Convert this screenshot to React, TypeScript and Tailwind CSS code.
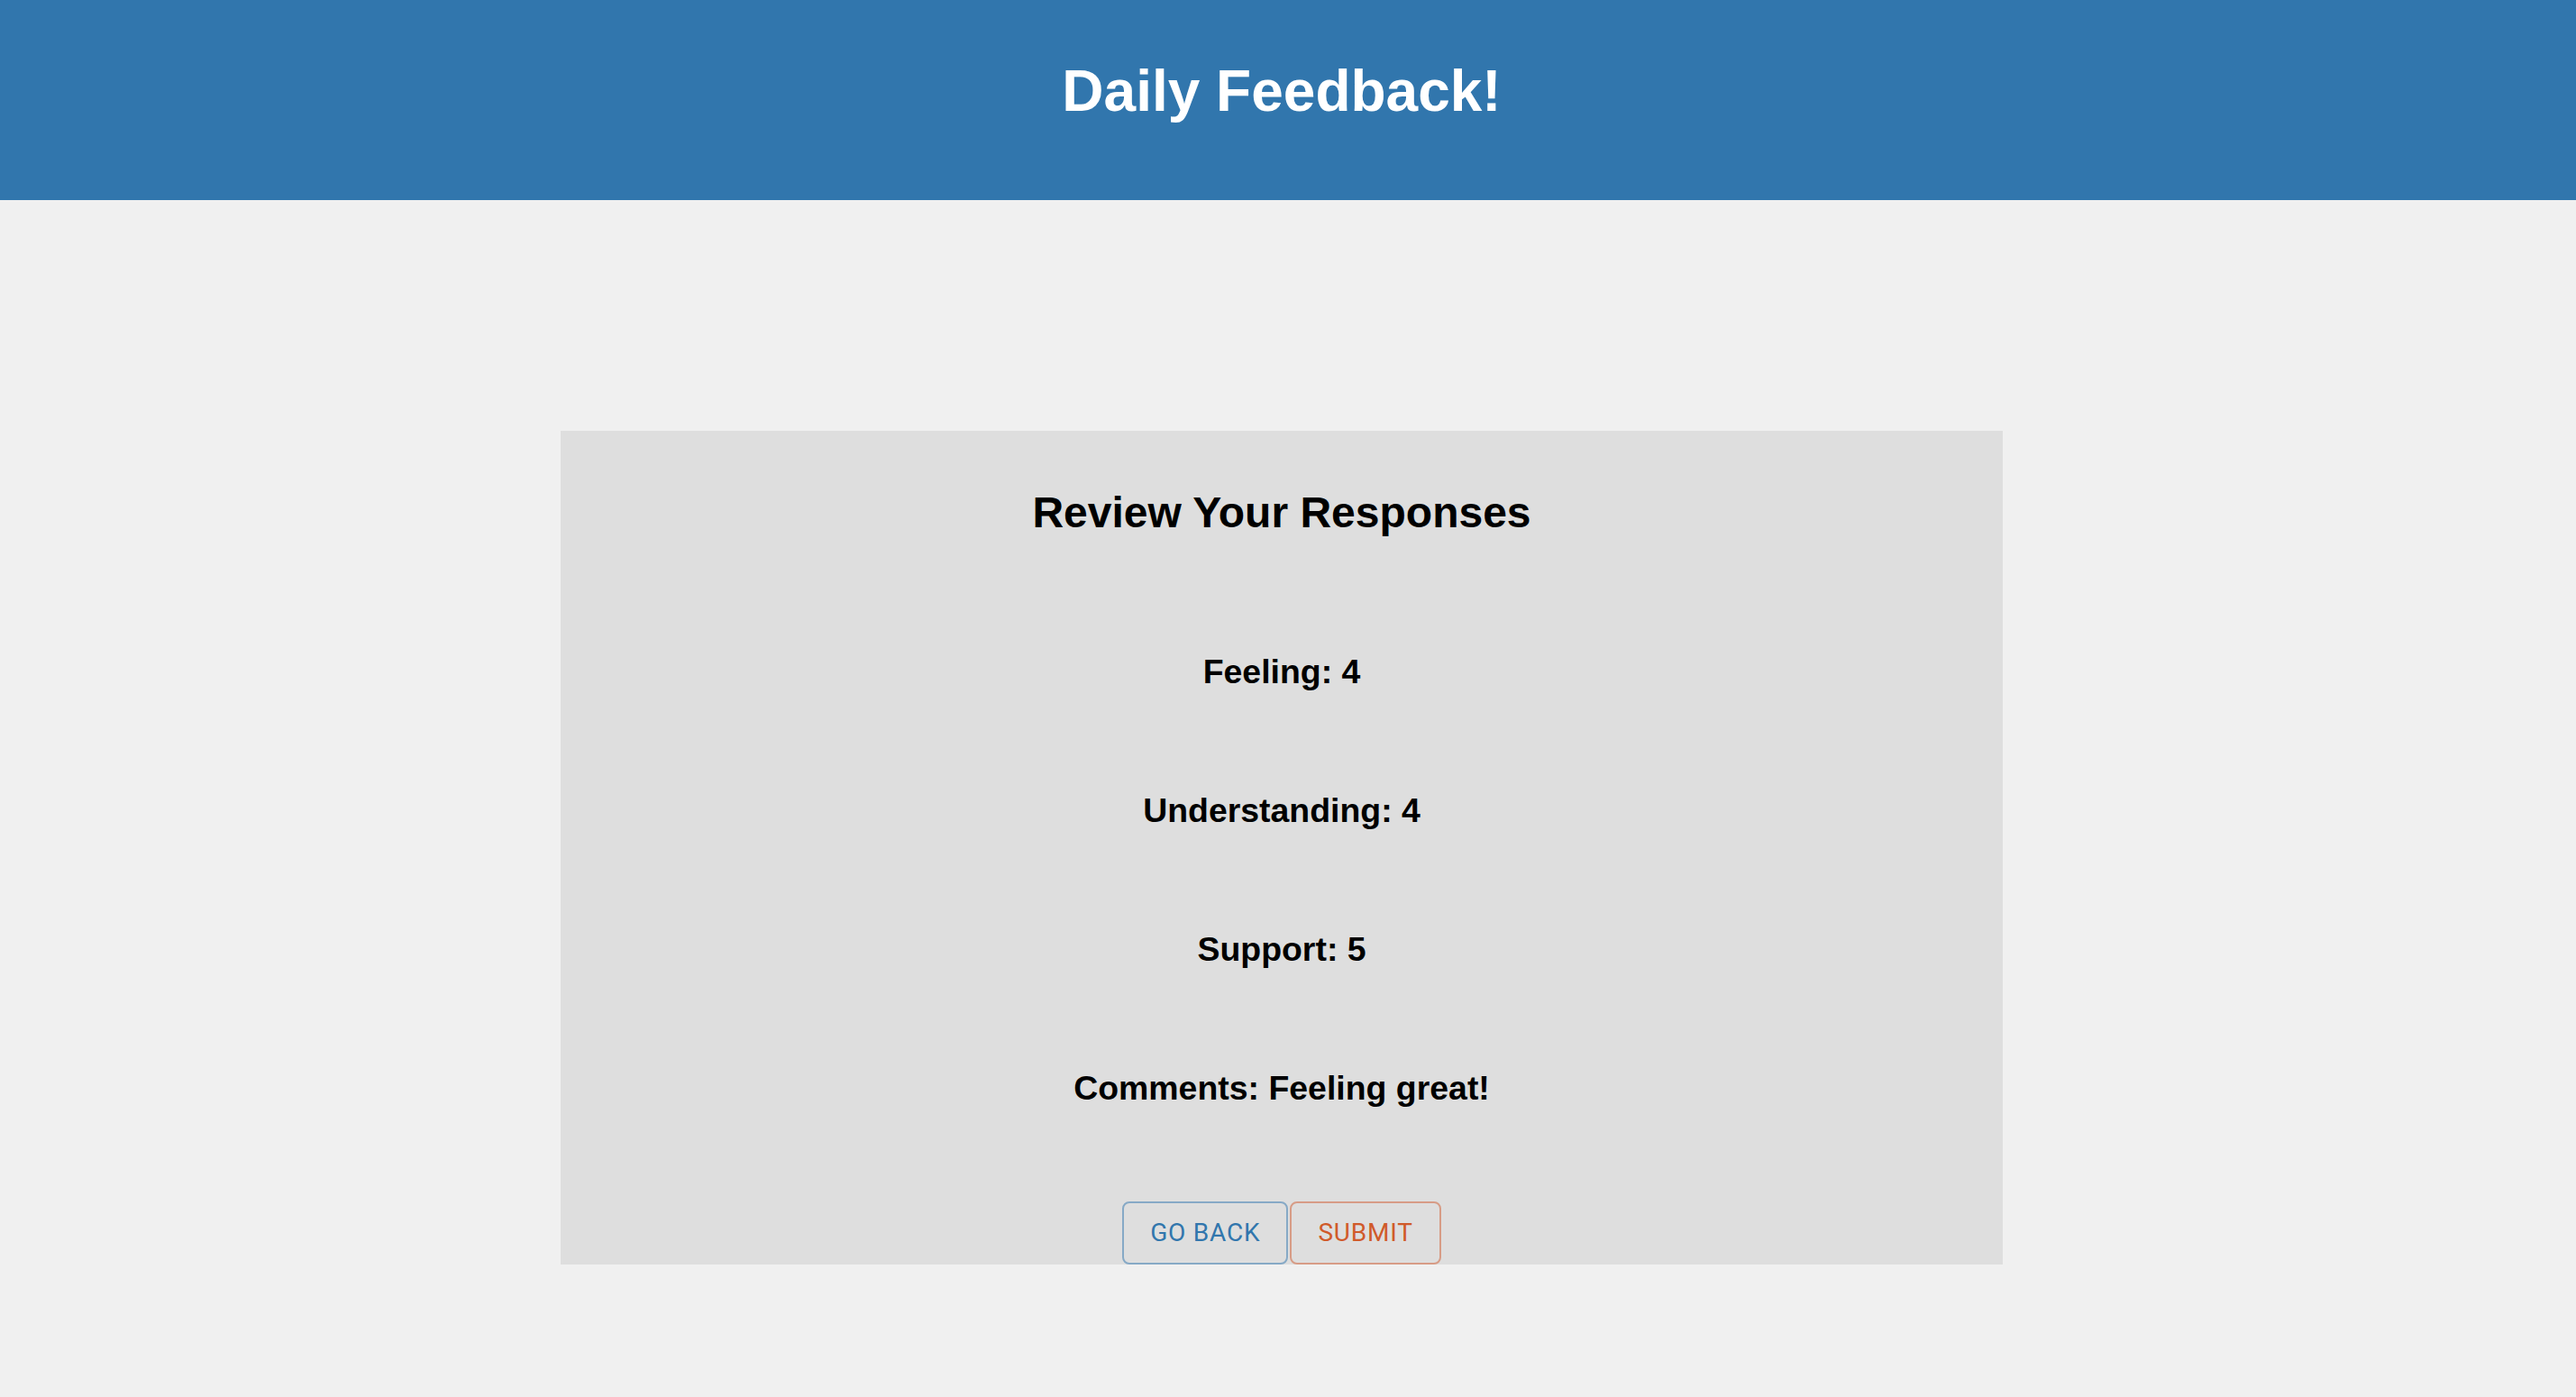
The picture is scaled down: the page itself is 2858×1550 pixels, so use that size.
const responses = [
  { label: 'Feeling', value: '4' },
  { label: 'Understanding', value: '4' },
  { label: 'Support', value: '5' },
  { label: 'Comments', value: 'Feeling great!' },
]

export default function App() {
  return (
    <div className="min-h-screen bg-[#f0f0f0] font-['Liberation_Sans',Arial,sans-serif]">
      <header className="h-[222px] bg-[#3176ad]">
        <div className="w-[2844px] pt-[64px] text-center">
          <h1 className="text-[64px] font-bold leading-[74px] text-white">Daily Feedback!</h1>
        </div>
      </header>

      <main className="w-[2844px] pt-[256px]">
        <section className="mx-auto flex h-[925px] w-[1600px] flex-col items-center bg-[#dedede] pt-[63px] text-black">
          <h2 className="text-[48px] font-bold leading-[56px]">Review Your Responses</h2>

          <div className="mt-[127px] flex flex-col items-center gap-[111px]">
            {responses.map((r) => (
              <h3 key={r.label} className="text-[37.44px] font-bold leading-[43px]">
                {r.label}: {r.value}
              </h3>
            ))}
          </div>

          <div className="mt-[104px] flex">
            <button
              type="button"
              className="h-[70px] rounded-[8px] border-2 border-[#86a9c6] px-[29px] font-['Roboto',sans-serif] text-[28px] font-normal uppercase tracking-[0.8px] text-[#3176ad]"
            >
              Go Back
            </button>
            <button
              type="button"
              className="ml-[2px] h-[70px] rounded-[8px] border-2 border-[#d79c86] px-[29px] font-['Roboto',sans-serif] text-[28px] font-normal uppercase tracking-[0.8px] text-[#d05a2a]"
            >
              Submit
            </button>
          </div>
        </section>
      </main>
    </div>
  )
}
